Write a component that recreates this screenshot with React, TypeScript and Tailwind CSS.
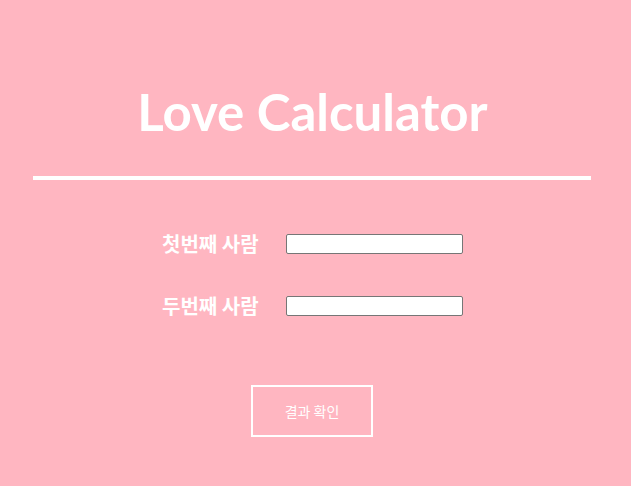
const font = { fontFamily: '"Noto Sans CJK KR", "Noto Sans", sans-serif' };

const people = ["첫번째 사람", "두번째 사람"];

export default function App() {
  return (
    <div
      className="min-h-screen w-full bg-[#ffb6c1] text-white flex flex-col"
      style={font}
    >
      <h1
        className="pt-[80px] pr-[6px] text-center text-[51px] font-bold leading-[64px]"
        style={{ fontFamily: 'Lato, "Noto Sans CJK KR", sans-serif' }}
      >
        Love Calculator
      </h1>
      <div className="mt-[32px] ml-[33px] h-[4px] w-[558px] bg-white" />

      <div className="mt-[54px] flex flex-col gap-[42px] pl-[162px]">
        {people.map(p => (
          <div key={p} className="flex items-center h-[20px]">
            <span className="w-[124px] text-[20px] font-bold leading-none">
              {p}
            </span>
            <input
              type="text"
              className="h-[20px] w-[177px] rounded-[2px] border border-[#767676] bg-white text-black text-sm"
            />
          </div>
        ))}
      </div>

      <div className="mt-[69px] flex pl-[251px]">
        <button className="h-[52px] w-[122px] border-2 border-white text-[14px] text-white">
          결과 확인
        </button>
      </div>
    </div>
  );
}
